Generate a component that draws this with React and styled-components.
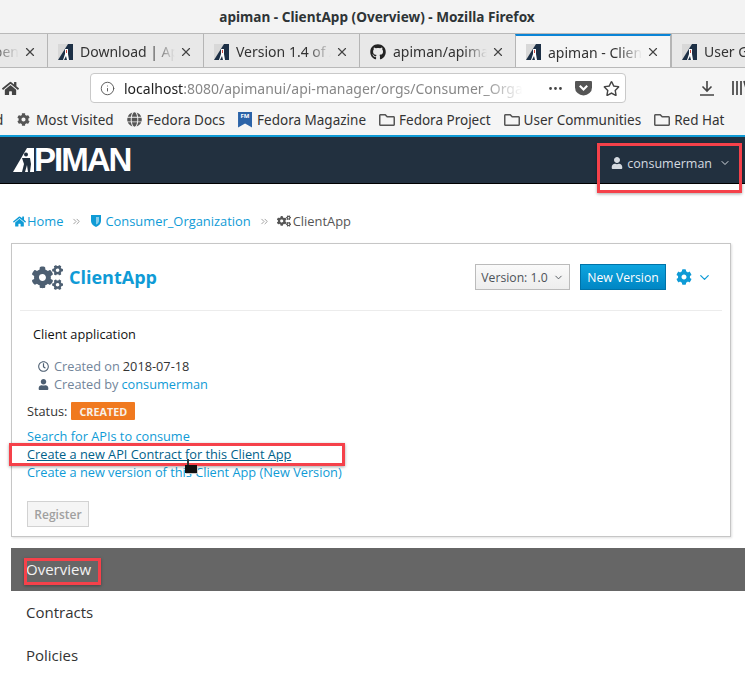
import React from 'react';
import styled, { createGlobalStyle } from 'styled-components';
import { FaHome, FaCogs, FaRegClock, FaUser, FaCog, FaGithub, FaRegFolder, FaGlobe, FaRegStar } from 'react-icons/fa';
import { ChevronDown, ChevronsRight, X, Info, Ellipsis } from 'lucide-react';

const GlobalStyle = createGlobalStyle`
html, body {
  margin: 0;
  padding: 0;
  background: #fff;
  overflow: hidden;
}
* { box-sizing: border-box; }
`

const Favicon = () => (
    <svg width="15" height="16" viewBox="0 0 15 16">
        <path d="M0 0h15v16H0z" fill="#d8d8d8" />
        <path d="M0 16 10 0h5v16z" fill="#1d3046" />
        <path d="M7 5h3v5l1 6H9l-1-4-2 4H5l2-6z" fill="#fff" />
        <path d="M8 6h1v3H8z" fill="#c8443a" />
    </svg>
)

const LogoMark = () => (
    <svg width="21" height="24" viewBox="0 0 21 24">
        <path d="M0 24 14 0h7v24z" fill="#fff" />
        <circle cx="13" cy="6.500" r="2" fill="#22303f" />
        <path d="M9 10h8l1 6-1 8h-2l-1-7-2 7H9l2-8z" fill="#22303f" />
    </svg>
)

const tabs = [
    { label: 'Open', clip: true },
    { label: 'Download | Apiman' },
    { label: 'Version 1.4 of Apiman' },
    { label: 'apiman/apiman', github: true },
    { label: 'apiman - ClientApp', active: true },
    { label: 'User Guide' },
]

const bookmarks = [
    { label: 'Most Visited', icon: <FaCog size={13} />, gap: 6 },
    { label: 'Fedora Docs', icon: <FaGlobe size={15} />, gap: 5 },
    { label: 'Fedora Magazine', icon: <FmIcon>FM</FmIcon>, gap: 5 },
    { label: 'Fedora Project', icon: <FaRegFolder size={16} />, gap: 4 },
    { label: 'User Communities', icon: <FaRegFolder size={16} />, gap: 4 },
    { label: 'Red Hat', icon: <FaRegFolder size={16} />, gap: 4 },
]

const App = () => {
    return (
        <Page>
            <GlobalStyle />
            <TitleBar>apiman - ClientApp (Overview) - Mozilla Firefox</TitleBar>
            <TabStrip>
                <TabRow>
                    {tabs.map((t) => (
                        <Tab key={t.label} $active={t.active}>
                            {t.github ? <FaGithub size={16} color="#222" /> : t.clip ? null : <Favicon />}
                            <TabLabel $clip={t.clip}>{t.label}</TabLabel>
                            <X size={14} strokeWidth={2} color="#444" />
                        </Tab>
                    ))}
                </TabRow>
            </TabStrip>
            <Toolbar>
                <HomeButton><FaHome size={17} /></HomeButton>
                <UrlBar>
                    <Info size={15} strokeWidth={1.5} color="#555" />
                    <UrlText><b>localhost</b>:8080/apimanui/api-manager/orgs/Consumer_Organization</UrlText>
                    <UrlActions>
                        <Ellipsis size={17} color="#444" />
                        <Pocket viewBox="0 0 16 14" width="17" height="15">
                            <path d="M1 0h14a1 1 0 0 1 1 1v5a8 7.5 0 0 1-16 0V1a1 1 0 0 1 1-1z" fill="#555" />
                            <path d="M4.5 4.5 8 8l3.5-3.5" stroke="#fff" strokeWidth="2" fill="none" />
                        </Pocket>
                        <FaRegStar size={17} color="#444" />
                    </UrlActions>
                </UrlBar>
                <ToolIcons>
                    <ToolSvg viewBox="0 0 14 16" width="14" height="16">
                        <path d="M7 1v10M2.500 6.500 7 11l4.500-4.500M0 15h14" stroke="#444" strokeWidth="1.600" fill="none" />
                    </ToolSvg>
                    <ToolSvg viewBox="0 0 16 16" width="16" height="16">
                        <path d="M1 1v14M5 1v14M9 1v14M12 1l4 14" stroke="#444" strokeWidth="1.7" fill="none" />
                    </ToolSvg>
                </ToolIcons>
            </Toolbar>
            <BookmarkBar>
                <BookmarkCut>d</BookmarkCut>
                {bookmarks.map((b) => (
                    <Bookmark key={b.label} $gap={b.gap}>{b.icon}{b.label}</Bookmark>
                ))}
            </BookmarkBar>
            <NavBar>
                <Logo><LogoMark /><LogoText>PIMAN</LogoText></Logo>
                <UserMenu>
                    <FaUser size={12} />
                    consumerman
                    <ChevronDown size={12} />
                    <Highlight $top={-12} $left={-14} $right={-11} $bottom={-21} />
                </UserMenu>
            </NavBar>
            <Breadcrumbs>
                <Crumb><FaHome size={13} />Home</Crumb>
                <Sep><ChevronsRight size={11} /></Sep>
                <Crumb $gap={4}>
                    <svg width="10" height="12" viewBox="0 0 10 12"><path d="M0 0h10v6c0 3-2.500 5-5 6-2.500-1-5-3-5-6z" fill="#0f9bd6" /><path d="M5 2h3v4c0 1.500-1.500 3-3 3.500z" fill="#fff" opacity=".5" /></svg>
                    Consumer_Organization
                </Crumb>
                <Sep><ChevronsRight size={11} /></Sep>
                <Crumb $plain><FaCogs size={14} />ClientApp</Crumb>
            </Breadcrumbs>
            <Card>
                <CardHead>
                    <CardTitle><FaCogs size={31} color="#4d5f72" /><span>ClientApp</span></CardTitle>
                    <CardActions>
                        <VersionButton>Version: 1.0 <ChevronDown size={11} /></VersionButton>
                        <PrimaryButton>New Version</PrimaryButton>
                        <GearMenu><FaCog size={16} /><ChevronDown size={15} /></GearMenu>
                    </CardActions>
                </CardHead>
                <CardBody>
                    <Description>Client application</Description>
                    <Meta><FaRegClock size={11} color="#4d5f72" /><MetaLabel>Created on</MetaLabel> 2018-07-18</Meta>
                    <Meta><FaUser size={11} color="#4d5f72" /><MetaLabel>Created by</MetaLabel> <ALink>consumerman</ALink></Meta>
                    <StatusRow>Status: <Badge>CREATED</Badge></StatusRow>
                    <ActionLink>Search for APIs to consume</ActionLink>
                    <ActionLink $hover>
                        Create a new API Contract for this Client App
                        <Highlight $top={-2} $left={-18} $right={-54} $bottom={-3} />
                        <Cursor />
                    </ActionLink>
                    <ActionLink>Create a new version of this Client App (New Version)</ActionLink>
                    <RegisterButton>Register</RegisterButton>
                </CardBody>
            </Card>
            <SideNav>
                <NavItem $active>
                    <NavText>Overview<Highlight $top={-1} $left={-2} $right={-10} $bottom={-6} /></NavText>
                </NavItem>
                <NavItem>Contracts</NavItem>
                <NavItem>Policies</NavItem>
            </SideNav>
        </Page>
    )
}

export default App

const Page = styled.div`
width: 745px;
height: 673px;
overflow: hidden;
font-family: "Open Sans", sans-serif;
background: #fff;
`

const TitleBar = styled.div`
height: 34px;
background: #f3f3f3;
border-bottom: 1px solid #b9b9b9;
display: flex;
align-items: center;
justify-content: center;
padding-left: 9px;
font: 700 13.600px "Noto Sans", sans-serif;
color: #2e3436;
`

const TabStrip = styled.div`
height: 34px;
background: #e8e8e8;
border-bottom: 1px solid #b9b9b9;
overflow: hidden;
`

const TabRow = styled.div`
display: flex;
margin-left: -109px;
width: 960px;
`

const Tab = styled.div`
width: 156px;
flex: none;
height: ${p => p.$active ? '34px' : '33px'};
display: flex;
align-items: center;
gap: 7px;
padding: ${p => p.$active ? '0' : '2px'} 10px 0 10px;
background: ${p => p.$active ? '#f5f5f5' : 'transparent'};
border-left: 1px solid #b5b5b5;
border-right: ${p => p.$active ? '1px solid #b5b5b5' : '0'};
border-top: ${p => p.$active ? '2px solid #0a84d6' : '0'};
font: 400 14px "Noto Sans", sans-serif;
color: #333;
`

const TabLabel = styled.span`
flex: 1;
min-width: 0;
margin-right: -3px;
white-space: nowrap;
overflow: hidden;
text-align: ${p => p.$clip ? 'right' : 'left'};
-webkit-mask-image: linear-gradient(90deg, #000 75%, transparent);
mask-image: linear-gradient(90deg, #000 75%, transparent);
`

const Toolbar = styled.div`
height: 36px;
padding-top: 4px;
background: #f5f5f5;
display: flex;
align-items: center;
`

const HomeButton = styled.div`
width: 90px;
flex: none;
padding-left: 2px;
display: flex;
color: #444;
`

const UrlBar = styled.div`
width: 536px;
flex: none;
height: 30px;
background: #fff;
border: 1px solid #c9c9c9;
border-radius: 4px;
display: flex;
align-items: center;
padding: 0 5px 0 9px;
gap: 9px;
`

const UrlText = styled.div`
flex: 1;
min-width: 0;
margin-right: 15px;
white-space: nowrap;
overflow: hidden;
font: 400 14px "Noto Sans", sans-serif;
color: #888;
-webkit-mask-image: linear-gradient(90deg, #000 90%, transparent);
mask-image: linear-gradient(90deg, #000 90%, transparent);
b { font-weight: 400; color: #222; }
`

const UrlActions = styled.div`
display: flex;
align-items: center;
gap: 11px;
`

const Pocket = styled.svg`
display: block;
`

const ToolIcons = styled.div`
display: flex;
align-items: center;
gap: 18px;
margin-left: 74px;
`

const ToolSvg = styled.svg`
flex: none;
`

const BookmarkBar = styled.div`
height: 31px;
background: #f5f5f5;
display: flex;
align-items: center;
font: 400 13.500px "Noto Sans", sans-serif;
color: #333;
white-space: nowrap;
overflow: hidden;
`

const BookmarkCut = styled.span`
width: 22px;
margin-left: -5px;
flex: none;
`

const Bookmark = styled.div`
display: flex;
align-items: center;
flex: none;
gap: ${p => p.$gap}px;
margin-right: 13px;
svg { color: #555; }
`

function FmIcon({ children }) {
    return <FmBadge>{children}</FmBadge>
}

const FmBadge = styled.span`
width: 14px;
height: 16px;
background: #2b63a8;
color: #fff;
font: 700 6px "Noto Sans", sans-serif;
text-align: center;
line-height: 9px;
clip-path: polygon(0 0, 100% 0, 100% 100%, 50% 75%, 0 100%);
`

const NavBar = styled.div`
height: 49px;
background: #22303f;
border-top: 2px solid #0f9bd6;
border-bottom: 1px solid #000;
display: flex;
align-items: center;
justify-content: space-between;
padding: 0 14px 0 13px;
`

const Logo = styled.div`
display: flex;
align-items: center;
`

const LogoText = styled.span`
font: 700 33px "Liberation Sans", sans-serif;
letter-spacing: -2px;
color: #fff;
line-height: 24px;
`

const UserMenu = styled.div`
position: relative;
top: 3px;
display: flex;
align-items: center;
gap: 4px;
font-size: 12.500px;
color: #d5dae0;
svg:last-of-type { margin-left: 3px; }
`

const Highlight = styled.div`
position: absolute;
top: ${p => p.$top}px;
left: ${p => p.$left}px;
right: ${p => p.$right}px;
bottom: ${p => p.$bottom}px;
border: 3px solid #f5414a;
box-shadow: 0 1px 3px rgba(0,0,0,.35);
pointer-events: none;
`

const Breadcrumbs = styled.div`
display: flex;
align-items: center;
height: 20px;
margin: 27px 0 12px 13px;
font-size: 12.900px;
`

const Crumb = styled.span`
display: flex;
align-items: center;
gap: ${p => p.$gap || (p.$plain ? 2 : 1)}px;
margin-left: ${p => p.$plain ? '-2px' : '0'};
color: ${p => p.$plain ? '#555' : '#0f9bd6'};
`

const Sep = styled.span`
display: flex;
color: #999;
margin: 0 9px 0 8px;
`

const Card = styled.div`
margin: 0 14px 0 11px;
height: 294px;
border: 1px solid #c6c6c6;
box-shadow: 1px 1px 2px rgba(0,0,0,.12);
padding: 0 8px;
`

const CardHead = styled.div`
height: 67px;
border-bottom: 1px solid #ececec;
display: flex;
align-items: center;
justify-content: space-between;
padding: 0 0 0 12px;
`

const CardTitle = styled.h1`
margin: 0;
display: flex;
align-items: center;
gap: 6px;
font-size: 18px;
font-weight: 700;
color: #0f9bd6;
`

const CardActions = styled.div`
display: flex;
align-items: center;
`

const VersionButton = styled.div`
width: 95px;
height: 26px;
display: flex;
align-items: center;
justify-content: center;
gap: 5px;
font-size: 12.200px;
color: #4d5258;
background: linear-gradient(#fafafa, #ededed);
border: 1px solid #bbb;
`

const PrimaryButton = styled.div`
width: 86px;
height: 26px;
margin-left: 10px;
display: flex;
align-items: center;
justify-content: center;
font-size: 12.200px;
color: #fff;
background: linear-gradient(#0ea5df, #0086c4);
border: 1px solid #0073a8;
`

const GearMenu = styled.div`
display: flex;
align-items: center;
gap: 5px;
margin: 0 10px 0 10px;
color: #0f9bd6;
`

const CardBody = styled.div`
padding: 14px 0 0 7px;
font-size: 12.750px;
`

const Description = styled.div`
height: 20px;
margin: 0 0 12px 6px;
color: #111;
`

const Meta = styled.div`
display: flex;
align-items: center;
gap: 5px;
height: 18px;
padding-left: 11px;
color: #333;
`

const MetaLabel = styled.span`
color: #72859a;
margin-right: -2px;
`

const ALink = styled.span`
color: #0f9bd6;
`

const StatusRow = styled.div`
height: 20px;
margin-top: 8px;
margin-bottom: 6px;
display: flex;
align-items: center;
gap: 4px;
color: #333;
`

const Badge = styled.span`
background: #f0791f;
color: #f8f0e8;
font-size: 10.800px;
font-weight: 700;
height: 18px;
padding: 0 8px;
display: flex;
align-items: center;
border-radius: 1px;
`

const ActionLink = styled.div`
position: relative;
z-index: ${p => p.$hover ? 1 : 0};
width: fit-content;
height: 18px;
line-height: 18px;
color: ${p => p.$hover ? '#00618a' : '#0f9bd6'};
text-decoration: ${p => p.$hover ? 'underline' : 'none'};
`

const Cursor = styled.div`
position: absolute;
left: 158px;
top: 20px;
width: 12px;
height: 8px;
background: #111;
box-shadow: 1px 1px 0 #ccc;
&:before {
    content: "";
    position: absolute;
    left: 2px;
    top: -6px;
    width: 2px;
    height: 6px;
    background: #333;
}
`

const RegisterButton = styled.div`
width: 62px;
height: 26px;
margin-top: 20px;
display: flex;
align-items: center;
justify-content: center;
font-size: 12px;
font-weight: 600;
color: #a0a0a0;
background: #f5f5f5;
border: 1px solid #d2d2d2;
`

const SideNav = styled.div`
margin: 11px 0 0 11px;
`

const NavItem = styled.div`
height: 43px;
padding: 0 0 2px 15px;
display: flex;
align-items: center;
font-size: 15px;
background: ${p => p.$active ? '#666' : 'transparent'};
color: ${p => p.$active ? '#f2f2f2' : '#333'};
`

const NavText = styled.span`
position: relative;
`
